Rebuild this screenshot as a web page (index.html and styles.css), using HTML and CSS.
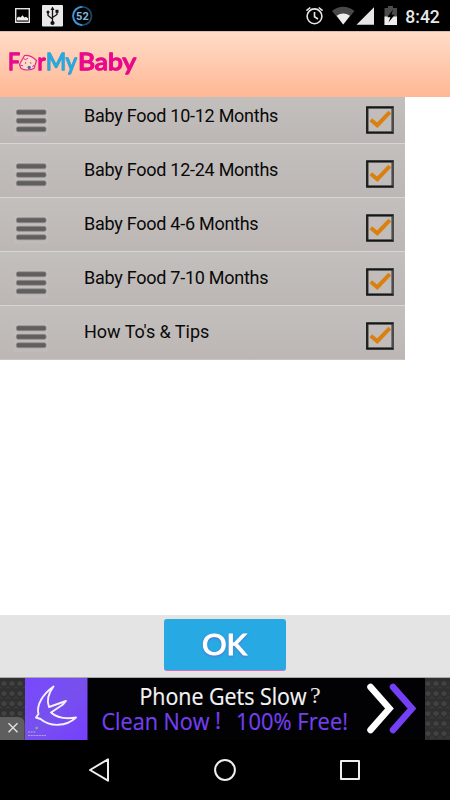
FILE: index.html
```html
<!DOCTYPE html>
<html lang="en">
<head>
<meta charset="utf-8">
<title>ForMyBaby</title>
<link rel="stylesheet" href="styles.css">
</head>
<body>
<svg class="defs" width="0" height="0">
  <symbol id="menu" viewBox="0 0 36 30">
    <rect x="1" y="1" width="34" height="28" rx="2" fill="#fff" opacity=".05"/>
    <g fill="#605f5e" stroke="#949190" stroke-width=".7"><rect x="3.3" y="2.8" width="29.8" height="5" rx="1.8"/><rect x="3.3" y="11.3" width="29.8" height="5" rx="1.8"/><rect x="3.3" y="19.8" width="29.8" height="5" rx="1.8"/></g>
  </symbol>
  <symbol id="check" viewBox="0 0 28 28">
    <rect x="1.3" y="1.3" width="25.4" height="25.4" fill="#c2bdbb" stroke="#4a4d4b" stroke-width="2.6"/>
    <path d="M1 1.4H27M1 26.4H27M1 1V27" stroke="#161616" stroke-width="1.5" fill="none"/>
    <path d="M4.8 13.8L11.3 19.2L23.8 6.2" fill="none" stroke="#d9800f" stroke-width="4"/>
  </symbol>
</svg>
<main class="phone">
  <header class="status">
    <svg width="450" height="31" viewBox="0 0 450 31">
      <rect x="15.7" y="8.7" width="13.6" height="13.6" fill="none" stroke="#e4e4e4" stroke-width="1.4"/>
      <path d="M17 20.6V17.8L19 16.6L20.4 17.6L22.6 15.2L24.3 17.4L26 16.8L28 18.2V20.6Z" fill="#eee"/>
      <rect x="42" y="5" width="21" height="21.5" rx="1" fill="#e9e9e9"/>
      <g fill="none" stroke="#111" stroke-width="1.3"><path d="M52.5 9V23M48 12.5V15.5L52.5 19M57 11.5V14.5L52.5 17.5"/></g>
      <path d="M52.5 6.5L54.5 10H50.5Z" fill="#111"/><circle cx="52.5" cy="23" r="2.1" fill="#111"/><circle cx="48" cy="12" r="1.5" fill="#111"/><rect x="55.5" y="9.8" width="3" height="3" fill="#111"/>
      <circle cx="82.3" cy="16" r="9.2" fill="none" stroke="#1b4769" stroke-width="1.8"/>
      <path d="M82.3 6.8A9.2 9.2 0 1 0 82.3 25.2" fill="none" stroke="#3b96dc" stroke-width="1.8"/>
      <text class="percent" x="82.4" y="20" text-anchor="middle">52</text>
      <g fill="none" stroke="#e8e8e8" stroke-width="1.6"><circle cx="314.5" cy="16.3" r="7.4"/><path d="M314.5 12V16.8L318 19M306.4 10.7L310.3 7.5M322.6 10.7L318.7 7.5"/></g>
      <path d="M332 11Q343 2.6 354.5 11L343.2 24.5Z" fill="#484848"/>
      <path d="M336.6 15.8Q343.2 11.4 350 15.8L343.2 24.5Z" fill="#ededed"/>
      <path d="M374 7.2V24.8H356.5Z" fill="#e6e6e6"/>
      <path d="M384.5 8H388V6H393V8H397V25H384.5Z" fill="#4b4b4b"/><path d="M384.5 16.5H397V25H384.5Z" fill="#eee"/>
      <path d="M393 9.5L387.3 17.2H390.4L388.5 22.6L394.7 14.8H391.5Z" fill="#000"/>
      <text class="clock" x="405.3" y="22.6" textLength="34.5" lengthAdjust="spacingAndGlyphs">8:42</text>
    </svg>
  </header>
  <div class="appbar">
    <svg width="150" height="66" viewBox="0 31 150 66">
      <g class="logo">
        <g class="pink"><text x="8" y="69.5" textLength="12" lengthAdjust="spacingAndGlyphs">F</text><text x="37.5" y="69.5" textLength="8" lengthAdjust="spacingAndGlyphs">r</text><text x="78" y="69.5" textLength="58" lengthAdjust="spacingAndGlyphs">Baby</text></g>
        <text class="blue" x="46" y="69.5" textLength="31" lengthAdjust="spacingAndGlyphs">My</text>
      </g>
      <path d="M19.5 64.5L24.5 55.5Q31 55 36.5 60.5L34 68.5Q27 71.5 21 68.5Z" fill="#fbdcc7" stroke="#e7298f" stroke-width="1.2" stroke-linejoin="round"/>
      <path d="M23.5 58.5Q25.5 61 28 58M20.5 65L23 66M34 65L32.5 67" fill="none" stroke="#ed078d" stroke-width=".9"/>
      <circle cx="25.5" cy="63" r=".7" fill="#b33679"/><circle cx="30.7" cy="63" r=".7" fill="#b33679"/><circle cx="29.2" cy="67.5" r="1.7" fill="#426fbc"/>
    </svg>
  </div>
  <section class="content">
    <ul class="list">
      <li class="row first"><svg class="menu"><use href="#menu"/></svg><span>Baby Food 10-12 Months</span><svg class="check"><use href="#check"/></svg></li>
      <li class="row"><svg class="menu"><use href="#menu"/></svg><span>Baby Food 12-24 Months</span><svg class="check"><use href="#check"/></svg></li>
      <li class="row"><svg class="menu"><use href="#menu"/></svg><span>Baby Food 4-6 Months</span><svg class="check"><use href="#check"/></svg></li>
      <li class="row"><svg class="menu"><use href="#menu"/></svg><span>Baby Food 7-10 Months</span><svg class="check"><use href="#check"/></svg></li>
      <li class="row last"><svg class="menu"><use href="#menu"/></svg><span>How To's &amp; Tips</span><svg class="check"><use href="#check"/></svg></li>
    </ul>
  </section>
  <footer class="actions">
    <button class="ok"><svg width="122" height="51"><text x="38" y="35.5" textLength="45" lengthAdjust="spacingAndGlyphs">OK</text></svg></button>
  </footer>
  <section class="ad">
    <svg width="450" height="62" viewBox="0 678 450 62">
      <defs>
        <pattern id="hex" width="8" height="10" patternUnits="userSpaceOnUse"><rect width="8" height="10" fill="#303030"/><path d="M4 0.5L7 2.3V5L4 6.6L1 5V2.3ZM0 5.5V8L3 9.8M8 5.5V8L5 9.8" fill="#424242" stroke="#292929" stroke-width=".6"/></pattern>
        <linearGradient id="violet" x2="1" y2="1"><stop stop-color="#7848ff"/><stop offset=".5" stop-color="#7850ed"/><stop offset="1" stop-color="#753fff"/></linearGradient>
      </defs>
      <rect y="678" width="450" height="62" fill="url(#hex)"/>
      <rect x="25" y="678" width="400" height="62" fill="#020104"/>
      <rect x="25" y="678" width="62.5" height="62" fill="url(#violet)"/>
      <path d="M53.5 686.5C43 694 36 705 38.5 714L36 717.5L40.5 719C50 727 66 727 76 717.5C67 719 57 718 51 712.5L63 704.5L66 701L49 707C46.5 701 48 694 53.5 686.5Z" fill="none" stroke="#f4f0ff" stroke-width="1.9" stroke-linejoin="round"/>
      <path d="M28 732H36M28 735.5H46" stroke="#b39df0" stroke-width="1.1" stroke-dasharray="2 .7"/><circle cx="36.7" cy="728" r="1.3" fill="#75b79c"/>
      <path d="M0 717H18Q24.5 717 24.5 724V740H0Z" fill="#5e5e5e"/>
      <path d="M8.5 723.3L17.5 732.3M17.5 723.3L8.5 732.3" stroke="#e2e2e2" stroke-width="1.4"/>
      <g class="ad-text"><text class="white" x="139.5" y="704.6" textLength="167" lengthAdjust="spacingAndGlyphs">Phone Gets Slow</text><text class="question" x="310" y="702.5">?</text>
      <g class="purple"><text x="101.5" y="730" textLength="108" lengthAdjust="spacingAndGlyphs">Clean Now</text><text x="215" y="729">!</text><text x="236" y="730" textLength="112" lengthAdjust="spacingAndGlyphs">100% Free!</text></g></g>
      <g fill="none" stroke-width="6.5" stroke-linecap="round"><path d="M393 687L412 708.5L393 730" stroke="#7440f5"/><path d="M370.5 687L389.5 708.5L370.5 730" stroke="#fff"/></g>
    </svg>
  </section>
  <nav class="navigation">
    <svg width="24" height="26" viewBox="0 0 24 26"><path d="M2 13L20 2.3V23.7Z"/></svg>
    <svg width="24" height="26" viewBox="0 0 24 26"><circle cx="12" cy="13" r="9.9"/></svg>
    <svg width="24" height="26" viewBox="0 0 24 26"><rect x="3" y="4" width="18" height="18"/></svg>
  </nav>
</main>
</body>
</html>
```
FILE: styles.css
```css
* { box-sizing: border-box; }
body { margin: 0; background: #000; font-family: Roboto, sans-serif; }
svg { display: block; }
.defs { display: none; }
.phone { width: 450px; height: 800px; display: flex; flex-direction: column; overflow: hidden; background: #000; }
.status { height: 31px; flex: none; }
.percent { font: bold 11px Roboto, sans-serif; fill: #83b9df; }
.clock { font: 500 18px Roboto, sans-serif; fill: #e8e8e8; }
.appbar { height: 66px; flex: none; background: linear-gradient(#ffdcc8, #ffb794); border-top: 1px solid #d8bcae; }
.appbar svg { margin-top: -1px; }
.logo { font: 24px Lato, sans-serif; stroke-width: 1.3px; stroke-linejoin: round; filter: drop-shadow(.7px .8px .4px #b9948a); }
.logo .pink { fill: #ed078d; stroke: #ed078d; }
.logo .blue { fill: #27aae1; stroke: #27aae1; }
.content { height: 518px; flex: none; background: #fff; }
.list { list-style: none; width: 405px; margin: 0; padding: 0; }
.row { height: 54px; display: flex; align-items: flex-end; padding: 0 11px 9px 13px; background: linear-gradient(#c3bfbd, #bcb7b5); border-bottom: 1px solid #d8d6d5; }
.row.first { height: 47px; }
.row.last { padding-bottom: 9px; border-bottom-color: #c8c3c0; }
.row span { flex: 1; font-size: 18px; line-height: 22px; letter-spacing: -.26px; color: #090909; margin: 0 0 7px 35px; }
.row.last span { letter-spacing: -.03px; }
.menu { width: 36px; height: 30px; margin-bottom: -2.5px; }
.check { width: 28px; height: 28px; margin-bottom: .5px; }
.actions { height: 63px; flex: none; background: #e4e4e4; display: flex; justify-content: center; padding-top: 4px; border-bottom: 1px solid #aaa; }
.ok { width: 122px; height: 52px; padding: 0; border: 0; border-bottom: 1px solid #cf72bd; border-radius: 3px; background: #27a9e3; overflow: hidden; }
.ok text { font: 29px Lato, sans-serif; fill: #fff; stroke: #fff; stroke-width: 1.1px; filter: drop-shadow(0 1px 1px #5872c9); }
.ad { height: 62px; flex: none; }
.ad-text { font: 23px "Open Sans", sans-serif; stroke-width: .2px; }
.ad-text .white { fill: #f4f4f4; stroke: #f4f4f4; }
.ad-text .purple { fill: #7440ef; stroke: #7440ef; }
.ad-text .question { font: 24px "Liberation Serif", serif; fill: #e8e8e8; }
.navigation { height: 60px; display: flex; justify-content: space-between; align-items: center; padding: 0 88px; }
.navigation svg { fill: none; stroke: #eee; stroke-width: 2; stroke-linejoin: round; }
```
